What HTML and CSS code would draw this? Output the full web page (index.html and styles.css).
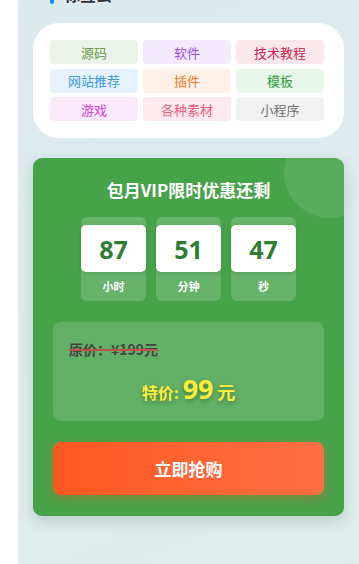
FILE: index.html
```html
<!DOCTYPE html>
<html lang="zh">
<head>
<meta charset="utf-8">
<title>VIP</title>
<link rel="stylesheet" href="styles.css">
</head>
<body>
<div class="page">
  <div class="section-head">
    <span class="bar"></span>
    <span class="section-title">标签云</span>
  </div>
  <div class="tag-card">
    <div class="tag-grid">
      <span class="tag t-src">源码</span>
      <span class="tag t-soft">软件</span>
      <span class="tag t-tech">技术教程</span>
      <span class="tag t-site">网站推荐</span>
      <span class="tag t-plug">插件</span>
      <span class="tag t-tpl">模板</span>
      <span class="tag t-game">游戏</span>
      <span class="tag t-mat">各种素材</span>
      <span class="tag t-mini">小程序</span>
    </div>
  </div>

  <div class="vip-card">
    <span class="deco-circle"></span>
    <div class="vip-title">包月VIP限时优惠还剩</div>
    <div class="countdown">
      <div class="cd-item">
        <div class="cd-num">87</div>
        <div class="cd-label">小时</div>
      </div>
      <div class="cd-item">
        <div class="cd-num">51</div>
        <div class="cd-label">分钟</div>
      </div>
      <div class="cd-item">
        <div class="cd-num">47</div>
        <div class="cd-label">秒</div>
      </div>
    </div>
    <div class="price-box">
      <div class="old-price">原价：¥199元</div>
      <div class="new-price"><span class="np-label">特价:</span> <span class="np-num">99</span> <span class="np-unit">元</span></div>
    </div>
    <button class="buy-btn">立即抢购</button>
  </div>
</div>
</body>
</html>
```

FILE: styles.css
```css
* { box-sizing: border-box; }
html, body { margin: 0; padding: 0; }
body {
  background: #ffffff;
  font-family: "Noto Sans", "Noto Sans CJK SC", sans-serif;
  overflow: hidden;
}
.page {
  display: flow-root;
  margin-left: 18px;
  min-height: 564px;
  background: linear-gradient(160deg, #dbeaed 0%, #dfebef 60%, #ddeeea 100%);
  padding: 0 15px 30px 15px;
}
.section-head {
  display: flex;
  align-items: center;
  gap: 10px;
  padding-left: 17px;
  margin-top: -16px;
  height: 22px;
}
.bar {
  width: 4px;
  height: 18px;
  border-radius: 2px;
  background: #1e88e5;
}
.section-title {
  font-size: 16px;
  font-weight: 700;
  color: #333;
  line-height: 22px;
}
.tag-card {
  margin-top: 17px;
  background: #fff;
  border-radius: 26px;
  padding: 17px 20px 17px 17px;
}
.tag-grid {
  display: grid;
  grid-template-columns: repeat(3, 1fr);
  column-gap: 5px;
  row-gap: 4.5px;
}
.tag {
  height: 24px;
  border-radius: 4px;
  display: flex;
  align-items: center;
  justify-content: center;
  font-size: 13px;
  font-family: "Noto Sans CJK SC", sans-serif;
}
.t-src { background: #ecf3e8; color: #6b9a4c; }
.t-soft { background: #f3eaff; color: #9b51e0; }
.t-tech { background: #fbe8ec; color: #cf2450; }
.t-site { background: #e6f3fe; color: #3a98e6; }
.t-plug { background: #fff0e8; color: #f0771e; }
.t-tpl { background: #e7f7e9; color: #2e9d3a; }
.t-game { background: #fbe8fb; color: #d23fd6; }
.t-mat { background: #fde9ee; color: #ea5c7c; }
.t-mini { background: #f2f2f2; color: #717171; }

.vip-card {
  position: relative;
  overflow: hidden;
  margin-top: 20px;
  background: #46a34a;
  border-radius: 9px;
  padding: 19px 20px 21px 20px;
  box-shadow: 0 5px 14px rgba(0, 60, 40, 0.18);
}
.deco-circle {
  position: absolute;
  width: 92px;
  height: 92px;
  border-radius: 50%;
  background: rgba(255, 255, 255, 0.1);
  right: -32px;
  top: -32px;
}
.vip-title {
  position: relative;
  text-align: center;
  color: #fff;
  font-size: 17px;
  font-weight: 700;
  line-height: 26px;
  font-family: "Noto Sans CJK SC", sans-serif;
}
.countdown {
  position: relative;
  display: flex;
  justify-content: center;
  gap: 10px;
  margin-top: 14px;
}
.cd-item {
  width: 65px;
  height: 84px;
  background: rgba(255, 255, 255, 0.18);
  border-radius: 6px;
  padding-top: 8px;
  display: flex;
  flex-direction: column;
  align-items: stretch;
}
.cd-num {
  height: 47px;
  background: #fff;
  border-radius: 5px;
  color: #2e7d32;
  font-size: 25px;
  font-weight: 700;
  display: flex;
  align-items: center;
  justify-content: center;
  box-shadow: 0 2px 4px rgba(0, 0, 0, 0.12);
  font-family: "Noto Sans", sans-serif;
}
.cd-label {
  text-align: center;
  color: #fff;
  font-size: 11px;
  font-weight: 700;
  line-height: 14px;
  margin-top: 7px;
  font-family: "Noto Sans CJK SC", sans-serif;
}
.price-box {
  margin-top: 21px;
  background: rgba(255, 255, 255, 0.15);
  border-radius: 8px;
  height: 99px;
  padding: 16px 16px 0 16px;
}
.old-price {
  font-size: 14px;
  font-weight: 700;
  color: #454545;
  line-height: 22px;
  text-decoration: line-through;
  text-decoration-color: #c0504a;
  text-decoration-thickness: 1.5px;
  font-family: "Noto Sans CJK SC", sans-serif;
}
.new-price {
  margin-top: 12px;
  text-align: center;
  color: #ffeb3b;
  font-weight: 700;
  line-height: 34px;
  text-shadow: 0 2px 4px rgba(0, 0, 0, 0.3);
  font-family: "Noto Sans CJK SC", sans-serif;
}
.np-label { font-size: 16px; }
.np-num { font-size: 27px; font-family: "Noto Sans", sans-serif; }
.np-unit { font-size: 18px; }
.buy-btn {
  display: block;
  width: 100%;
  margin-top: 21px;
  height: 53px;
  border: none;
  border-radius: 8px;
  background: linear-gradient(90deg, #ff5722 0%, #ff7043 100%);
  color: #fff;
  font-size: 17px;
  font-weight: 700;
  font-family: "Noto Sans CJK SC", sans-serif;
  box-shadow: 0 4px 12px rgba(255, 87, 34, 0.35);
}
```
